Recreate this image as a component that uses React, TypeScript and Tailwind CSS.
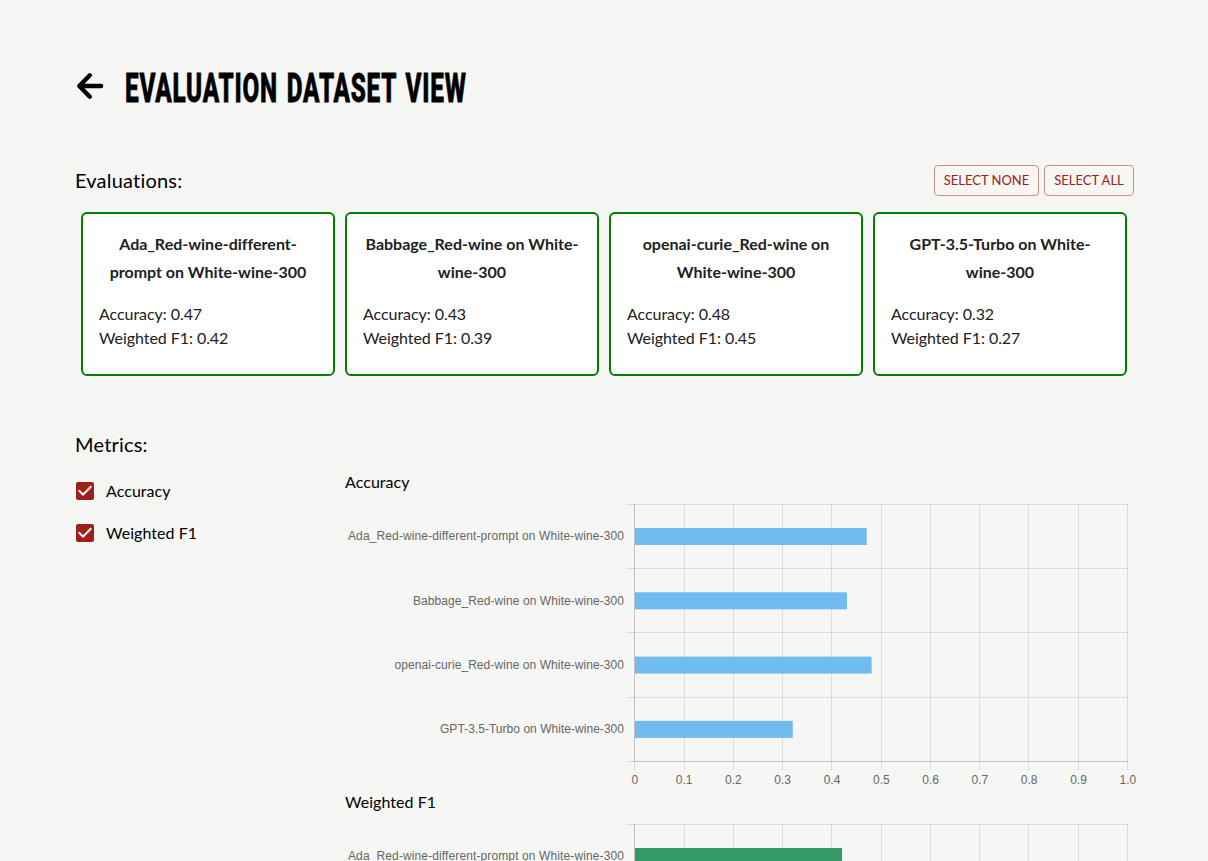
import React from "react";

const evaluations = [
  { name: "Ada_Red-wine-different-prompt on White-wine-300", accuracy: 0.47, f1: 0.42, labelWidth: 276 },
  { name: "Babbage_Red-wine on White-wine-300", accuracy: 0.43, f1: 0.39, labelWidth: 211 },
  { name: "openai-curie_Red-wine on White-wine-300", accuracy: 0.48, f1: 0.45, labelWidth: 229.5 },
  { name: "GPT-3.5-Turbo on White-wine-300", accuracy: 0.32, f1: 0.27, labelWidth: 184 },
];

const ticks = ["0", "0.1", "0.2", "0.3", "0.4", "0.5", "0.6", "0.7", "0.8", "0.9", "1.0"];
const columns = [289.5, 339.5, 388.5, 437.5, 486.5, 536.5, 585.5, 634.5, 683.5, 733.5, 782.5];
const rows = [10.5, 74.5, 138.5, 203.5, 267.5];
const baselines = [46, 111, 175, 239];

function BackArrow() {
  return (
    <svg width="28" height="28" viewBox="0 0 28 28" fill="none" stroke="#000" strokeWidth="4.4" strokeLinecap="round" strokeLinejoin="round">
      <path d="M13.8 3.3 3.3 14l10.5 10.7M3.5 14h21.6" />
    </svg>
  );
}

function Check({ label }: { label: string }) {
  return (
    <label className="flex h-[42px] items-center tracking-[0.05px]">
      <svg className="-ml-0.5 mr-[9px] size-6 shrink-0" viewBox="0 0 24 24" fill="#9e2016">
        <rect x="4" y="4" width="16" height="16" fill="#fff" />
        <path d="M19 3H5c-1.11 0-2 .9-2 2v14c0 1.1.89 2 2 2h14c1.11 0 2-.9 2-2V5c0-1.1-.89-2-2-2zm-9 14l-5-5 1.41-1.41L10 14.17l7.59-7.59L19 8l-9 9z" />
      </svg>
      {label}
    </label>
  );
}

function BarChart({ title, values, color }: { title: string; values: number[]; color: string }) {
  return (
    <section className="h-[320px]">
      <h3 className="h-6 leading-6 tracking-[0.05px]">{title}</h3>
      <svg className="block" width="800" height="296" fontFamily="'Liberation Sans', Arial, sans-serif" fontSize="12" fill="#666">
        {columns.map((x, i) => (
          <line key={x} x1={x} x2={x} y1="10" y2="276" stroke="#000" strokeOpacity={i ? 0.1 : 0.12} />
        ))}
        {rows.map((y) => (
          <line key={y} x1="282" x2="783" y1={y} y2={y} stroke="#000" strokeOpacity="0.1" />
        ))}
        <path d="M289.5 10v258M289 267.5h494" stroke="#000" strokeOpacity="0.1" />
        {values.map((v, i) => (
          <g key={i}>
            <rect x="290" y={34 + i * 64.3} width={v * 493} height="17" fill={color} />
            <text x={279 - evaluations[i].labelWidth} y={baselines[i]} textLength={evaluations[i].labelWidth}>
              {evaluations[i].name}
            </text>
          </g>
        ))}
        {ticks.map((t, i) => (
          <text key={t} x={289.8 + i * 49.3} y="290" textAnchor="middle">{t}</text>
        ))}
      </svg>
    </section>
  );
}

export default function App() {
  return (
    <main className="h-[861px] overflow-hidden bg-[#f6f6f4] pl-[75px] pr-[74px] pt-[60px] font-['Lato',sans-serif] text-base text-black [font-variant-ligatures:none]">
      <header className="flex h-[54px] items-center">
        <a className="mb-0.5 ml-px mr-[21px]" aria-label="Back"><BackArrow /></a>
        <h1 className="mt-px origin-left scale-x-[0.6] whitespace-nowrap font-['Roboto',sans-serif] text-[40.5px] font-extrabold leading-[54px] tracking-[1.3px] [-webkit-text-stroke:0.8px_#000] [word-spacing:3.5px]">EVALUATION DATASET VIEW</h1>
      </header>
      <div className="mt-[50px] flex h-8 items-center justify-between">
        <h2 className="text-xl tracking-[0.2px]">Evaluations:</h2>
        <div className="flex gap-[5px] text-[13px] text-[#9e2016]">
          <button className="h-[31px] w-[105px] rounded border border-[#cf908a] pt-px">SELECT NONE</button>
          <button className="h-[31px] w-[90px] rounded border border-[#cf908a] pt-px">SELECT ALL</button>
        </div>
      </div>
      <div className="mt-4 grid grid-cols-4 gap-2.5 pl-1.5 pr-[7px]">
        {evaluations.map((e) => (
          <article key={e.name} className="h-[164px] rounded-md border-2 border-[#008000] bg-white p-4 text-[#212121]">
            <h3 className="text-center font-bold leading-7">{e.name}</h3>
            <p className="mt-4 leading-6 tracking-[-0.06px]">Accuracy: {e.accuracy}</p>
            <p className="leading-6 tracking-[-0.06px]">Weighted F1: {e.f1}</p>
          </article>
        ))}
      </div>
      <h2 className="mt-[54px] text-xl leading-7 tracking-[0.2px]">Metrics:</h2>
      <div className="mt-3 flex">
        <div className="w-[270px] shrink-0">
          <Check label="Accuracy" />
          <Check label="Weighted F1" />
        </div>
        <div>
          <BarChart title="Accuracy" values={evaluations.map((e) => e.accuracy)} color="#70bcf0" />
          <BarChart title="Weighted F1" values={evaluations.map((e) => e.f1)} color="#339966" />
        </div>
      </div>
    </main>
  );
}
